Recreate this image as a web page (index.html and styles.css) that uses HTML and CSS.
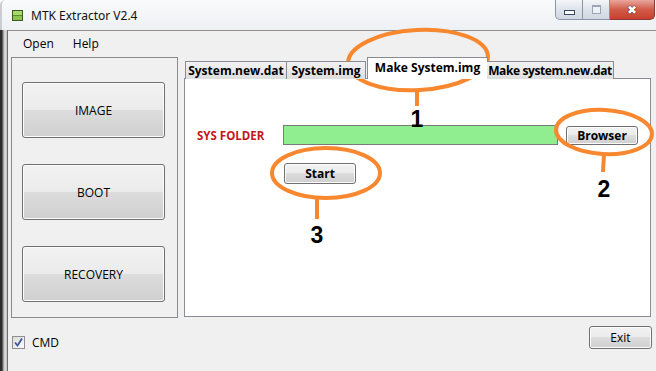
FILE: index.html
```html
<!DOCTYPE html>
<html>
 <head>
  <title>MTK Extractor V2.4</title>
  <meta charset="UTF-8"/>
  <link rel="stylesheet" href="styles.css">
 </head>
 <body>
 <div id="win">
  <div class="titlebar">
   <span class="appicon"></span>
   <span class="title">MTK Extractor V2.4</span>
   <div class="caption">
    <span class="cap min"><i></i></span>
    <span class="cap max"><i></i></span>
    <span class="cap close">&#10006;</span>
   </div>
  </div>

  <div class="body">
   <div class="frame"></div>
   <div class="client">
    <div class="menubar">
     <span>Open</span>
     <span>Help</span>
    </div>

    <div class="main">
     <div class="group">
      <button class="btn big">IMAGE</button>
      <button class="btn big">BOOT</button>
      <button class="btn big">RECOVERY</button>
     </div>

     <div class="tabctl">
      <div class="tabs">
       <span class="tab t1">System.new.dat</span>
       <span class="tab t2">System.img</span>
       <span class="tab t3 sel">Make System.img</span>
       <span class="tab t4">Make system.new.dat</span>
      </div>
      <div class="panel">
       <div class="row">
        <span class="lbl">SYS FOLDER</span>
        <span class="field"></span>
        <button class="btn small">Browser</button>
       </div>
       <button class="btn small start">Start</button>
      </div>
     </div>
    </div>

    <div class="footer">
     <label class="chk"><span class="box"><svg width="11" height="11" viewBox="0 0 11 11"><path d="M2 5.5 L4.5 8.5 L9 1.5" fill="none" stroke="#3b5a9a" stroke-width="1.8"/></svg></span>CMD</label>
     <button class="btn exit">Exit</button>
    </div>
   </div>
  </div>

  <svg class="notes" width="656" height="371" viewBox="0 0 656 371">
   <g fill="none" stroke="#f7882f" stroke-width="4">
    <ellipse cx="418" cy="60" rx="70" ry="30" transform="rotate(-3 418 60)"/>
    <path d="M417 90 L417 106"/>
    <ellipse cx="604" cy="132" rx="48" ry="22" transform="rotate(3 604 132)"/>
    <path d="M604 154 L603 172"/>
    <ellipse cx="326" cy="173" rx="54" ry="25"/>
    <path d="M317 198 L317 219"/>
   </g>
   <g class="num">
    <text x="417" y="127">1</text>
    <text x="604" y="197">2</text>
    <text x="317" y="243">3</text>
   </g>
  </svg>
 </div>
 </body>
</html>
```

FILE: styles.css
```css
body{
  margin: 0;
  font-family: "Open Sans", "Noto Sans", sans-serif;
  font-size: 12px;
  color: #000;
  background: #fff;
}
#win{
  position: relative;
  width: 656px;
  height: 371px;
  overflow: hidden;
  display: flex;
  flex-direction: column;
}
.titlebar{
  height: 30px;
  flex: none;
  display: flex;
  align-items: center;
  background: linear-gradient(#f9fafb, #eef1f4);
  border-left: 2px solid #c9cdd1;
  border-top-left-radius: 5px;
}
.appicon{
  width: 9px;
  height: 9px;
  margin-left: 10px;
  border: 1px solid #3d5a1e;
  background: linear-gradient(#a6d86a 0 40%, #5b8f2a 40% 55%, #8cc250 55%);
}
.title{
  margin-left: 8px;
  font-family: "Noto Sans", sans-serif;
  font-size: 12px;
  color: #111;
}
.caption{
  margin-left: auto;
  align-self: flex-start;
  display: flex;
  margin-right: 1px;
}
.cap{
  height: 19px;
  display: flex;
  align-items: center;
  justify-content: center;
  border: 1px solid #8a96a6;
  border-top: none;
  background: linear-gradient(#f4f6f8, #dde3ea 50%, #d0d8e2);
}
.min{
  width: 26px;
  border-bottom-left-radius: 5px;
}
.min i{
  width: 9px;
  height: 3px;
  margin-top: 6px;
  border: 1px solid #384860;
  background: #fff;
}
.max{
  width: 26px;
  border-left: none;
}
.max i{
  width: 7px;
  height: 6px;
  border: 1px solid #9aa6b6;
  border-top-width: 2px;
  background: #eef2f6;
}
.close{
  width: 44px;
  border-left: none;
  border-color: #8a3a36;
  border-bottom-right-radius: 5px;
  background: linear-gradient(#e8a79c, #d25b4a 50%, #c8402e);
  color: #fff;
  font-size: 12px;
  text-shadow: 0 0 1px #3a1010, 0 0 1px #3a1010;
}
.body{
  flex: 1;
  display: flex;
  min-width: 0;
}
.frame{
  flex: none;
  width: 7px;
  background: linear-gradient(to right, #2c2c2c 0 2px, #8c8c8c 3px, #e4e4e4 5px, #bdbdbd 7px);
}
.client{
  flex: 1;
  min-width: 0;
  background: #f0f0f0;
  border-left: 1px solid #6e6e6e;
  border-top: 1px solid #8e8e8e;
  display: flex;
  flex-direction: column;
}
.menubar{
  height: 24px;
  flex: none;
  display: flex;
  align-items: center;
  padding-left: 15px;
  gap: 19px;
}
.main{
  flex: none;
  display: flex;
  padding-left: 3px;
  gap: 6px;
}
.group{
  flex: none;
  margin-top: 2px;
  width: 167px;
  height: 261px;
  box-sizing: border-box;
  border: 1px solid #8a8a8a;
  padding: 24px 0 0 10px;
  display: flex;
  flex-direction: column;
  gap: 26px;
}
.btn{
  font-family: "Open Sans", "Noto Sans", sans-serif;
  font-size: 12px;
  color: #000;
  border: 1px solid #707070;
  border-radius: 3px;
  background: linear-gradient(#f2f2f2, #ebebeb 49%, #dddddd 50%, #cfcfcf);
  box-shadow: inset 0 0 0 1px #fcfcfc;
  padding: 0;
}
.big{
  flex: none;
  width: 143px;
  height: 56px;
}
.tabctl{
  flex: none;
  width: 467px;
  margin-top: 2px;
  display: flex;
  flex-direction: column;
}
.tabs{
  height: 22px;
  display: flex;
  align-items: flex-end;
  padding-left: 1px;
  margin-bottom: -1px;
  position: relative;
  z-index: 1;
}
.tab{
  flex: none;
  height: 18px;
  box-sizing: border-box;
  border: 1px solid #898c95;
  border-bottom: none;
  background: linear-gradient(#f3f3f3, #e8e8e8 50%, #dedede);
  font-weight: bold;
  font-size: 12px;
  line-height: 17px;
  text-align: center;
  white-space: nowrap;
  overflow: hidden;
}
.t1{ width: 102px; }
.t2{ width: 79px; border-left: none; }
.t3{ width: 121px; }
.t4{ width: 127px; border-left: none; margin-left: -1px; letter-spacing: -0.4px; }
.sel{
  height: 22px;
  background: #fff;
  line-height: 19px;
  margin-left: 1px;
}
.panel{
  height: 239px;
  background: #fff;
  border: 1px solid #898c95;
  padding: 46px 0 0 12px;
  box-sizing: border-box;
}
.row{
  display: flex;
  align-items: center;
  height: 20px;
}
.lbl{
  width: 86px;
  flex: none;
  color: #c4161c;
  font-weight: bold;
  font-size: 11.5px;
}
.field{
  flex: none;
  width: 273px;
  height: 18px;
  background: #90ee90;
  border: 1px solid #7a7a7a;
}
.small{
  width: 72px;
  height: 19px;
  font-weight: bold;
  font-size: 12px;
  margin-left: 8px;
}
.start{
  display: block;
  margin: 18px 0 0 87px;
  height: 21px;
}
.footer{
  flex: 1;
  display: flex;
  align-items: flex-start;
  padding-left: 4px;
}
.chk{
  display: flex;
  align-items: center;
  margin-top: 16px;
  gap: 7px;
}
.box{
  width: 11px;
  height: 11px;
  border: 1px solid #8f8f8f;
  background: linear-gradient(135deg, #dcdcdc, #fafafa);
  display: flex;
}
.exit{
  margin-left: auto;
  margin-right: 4px;
  margin-top: 8px;
  width: 63px;
  height: 23px;
}
.notes{
  position: absolute;
  left: 0;
  top: 0;
  pointer-events: none;
}
.num text{
  font-family: "Liberation Sans", Arial, sans-serif;
  font-weight: bold;
  font-size: 23px;
  text-anchor: middle;
  fill: #000;
}
```
